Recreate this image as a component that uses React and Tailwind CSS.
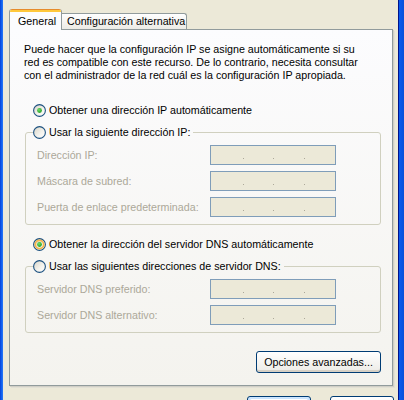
import React from "react";

const Radio = ({ checked, hover }) => (
  <svg width="13" height="13" viewBox="0 0 13 13" className="shrink-0">
    <defs>
      <linearGradient id="rfill" x1="0" y1="0" x2="1" y2="1">
        <stop offset="0" stopColor="#d6d3c6" />
        <stop offset="0.6" stopColor="#f5f4ef" />
        <stop offset="1" stopColor="#ffffff" />
      </linearGradient>
      <radialGradient id="rdot" cx="0.4" cy="0.35" r="0.7">
        <stop offset="0" stopColor="#6fe06a" />
        <stop offset="1" stopColor="#1e9a1e" />
      </radialGradient>
    </defs>
    <circle cx="6.5" cy="6.5" r="5.9" fill="url(#rfill)" stroke="#1c5180" strokeWidth="1.1" />
    {hover && <circle cx="6.5" cy="6.5" r="4.2" fill="none" stroke="#f5b54a" strokeWidth="1.8" />}
    {checked && <circle cx="6.5" cy="6.5" r="2.4" fill="url(#rdot)" />}
  </svg>
);

const IpBox = () => (
  <div className="w-[126px] h-[20px] border border-[#7f9db9] bg-[#ece9d8] flex items-end pb-[5px]">
    <span className="w-[32px]" />
    <span className="w-px h-px bg-[#aca899]" />
    <span className="w-[29px]" />
    <span className="w-px h-px bg-[#aca899]" />
    <span className="w-[30px]" />
    <span className="w-px h-px bg-[#aca899]" />
  </div>
);

const FieldRow = ({ label }) => (
  <div className="flex items-center justify-between h-[20px] pl-[11px] pr-[44px]">
    <span className="text-[#aca899]">{label}</span>
    <IpBox />
  </div>
);

const Group = ({ legend, fields }) => (
  <fieldset className="ml-[15px] w-[356px] border border-[#d0d0bf] rounded-[3px] pt-[5px] pb-[7px] flex flex-col gap-[6px]">
    <legend className="ml-[7px] pr-[3px] h-[16px] flex items-center gap-[3px]">
      <Radio />
      <span>{legend}</span>
    </legend>
    {fields.map((f) => (
      <FieldRow key={f} label={f} />
    ))}
  </fieldset>
);

const App = () => {
  return (
    <div className="w-[404px] h-[400px] overflow-hidden flex font-['Liberation_Sans',Arial,sans-serif] text-[10.7px] text-black">
      <div className="w-[3px] h-full bg-gradient-to-r from-[#0a3fd6] via-[#1060ee] to-[#2a78f6]" />

      <div className="w-[395px] h-full bg-[#ece9d8] pl-[6px] pt-[9px]">
        {/* Tabs */}
        <div className="flex items-end h-[20px] whitespace-nowrap">
          <div className="relative z-10 -mb-px h-[21px] w-[53px] bg-[#fcfcfe] border-x border-[#919b9c] rounded-t-[3px] overflow-hidden flex flex-col">
            <div className="h-[1px] bg-[#e68b2c]" />
            <div className="h-[2px] bg-[#ffc83c]" />
            <div className="flex-1 pl-[8px] pt-[1px]">General</div>
          </div>
          <div className="h-[16px] w-[125px] border-t border-r border-[#919b9c] rounded-tr-[3px] bg-gradient-to-b from-[#ffffff] to-[#ecebe5] pl-[5px] leading-[15px]">
            Configuración alternativa
          </div>
        </div>

        {/* Panel */}
        <div className="w-[384px] h-[357px] border border-[#919b9c] bg-gradient-to-b from-[#fcfcfe] to-[#f4f3ee] shadow-[1px_1px_0_#d0cfc6,2px_2px_0_#e2e0d5]">
          <p className="pl-[14px] pt-[13px] leading-[13px] whitespace-nowrap">
            Puede hacer que la configuración IP se asigne automáticamente si su
            <br />
            red es compatible con este recurso. De lo contrario, necesita consultar
            <br />
            con el administrador de la red cuál es la configuración IP apropiada.
          </p>

          <div className="mt-[20px] ml-[23px] h-[16px] flex items-center gap-[3px]">
            <Radio checked />
            <span>Obtener una dirección IP automáticamente</span>
          </div>

          <div className="mt-[6px]">
            <Group
              legend="Usar la siguiente dirección IP:"
              fields={["Dirección IP:", "Máscara de subred:", "Puerta de enlace predeterminada:"]}
            />
          </div>

          <div className="mt-[11px] ml-[23px] h-[16px] flex items-center gap-[3px]">
            <Radio checked hover />
            <span>Obtener la dirección del servidor DNS automáticamente</span>
          </div>

          <div className="mt-[6px]">
            <Group
              legend="Usar las siguientes direcciones de servidor DNS:"
              fields={["Servidor DNS preferido:", "Servidor DNS alternativo:"]}
            />
          </div>

          <div className="mt-[18px] flex justify-end pr-[11px]">
            <button className="w-[125px] h-[22px] border border-[#003c74] rounded-[3px] bg-gradient-to-b from-[#ffffff] to-[#ecebe6] shadow-[inset_0_-2px_0_#d6d0c5]">
              Opciones avanzadas...
            </button>
          </div>
        </div>

        {/* Bottom buttons (only their top edges are in view) */}
        <div className="mt-[10px] flex">
          <div className="ml-[238px] w-[64px] h-[23px] border border-[#003c74] rounded-[3px] bg-gradient-to-b from-[#cee7ff] to-[#98b8ea] p-[2px]">
            <div className="w-full h-full bg-gradient-to-b from-[#ffffff] to-[#ecebe6] rounded-[2px]" />
          </div>
          <div className="ml-[19px] w-[64px] h-[23px] border border-[#003c74] rounded-[3px] bg-gradient-to-b from-[#ffffff] to-[#ecebe6]" />
        </div>
      </div>

      <div className="w-[6px] h-full border-l border-[#00138c] bg-gradient-to-r from-[#0a5bf0] to-[#0850d8]" />
    </div>
  );
};

export default App;
